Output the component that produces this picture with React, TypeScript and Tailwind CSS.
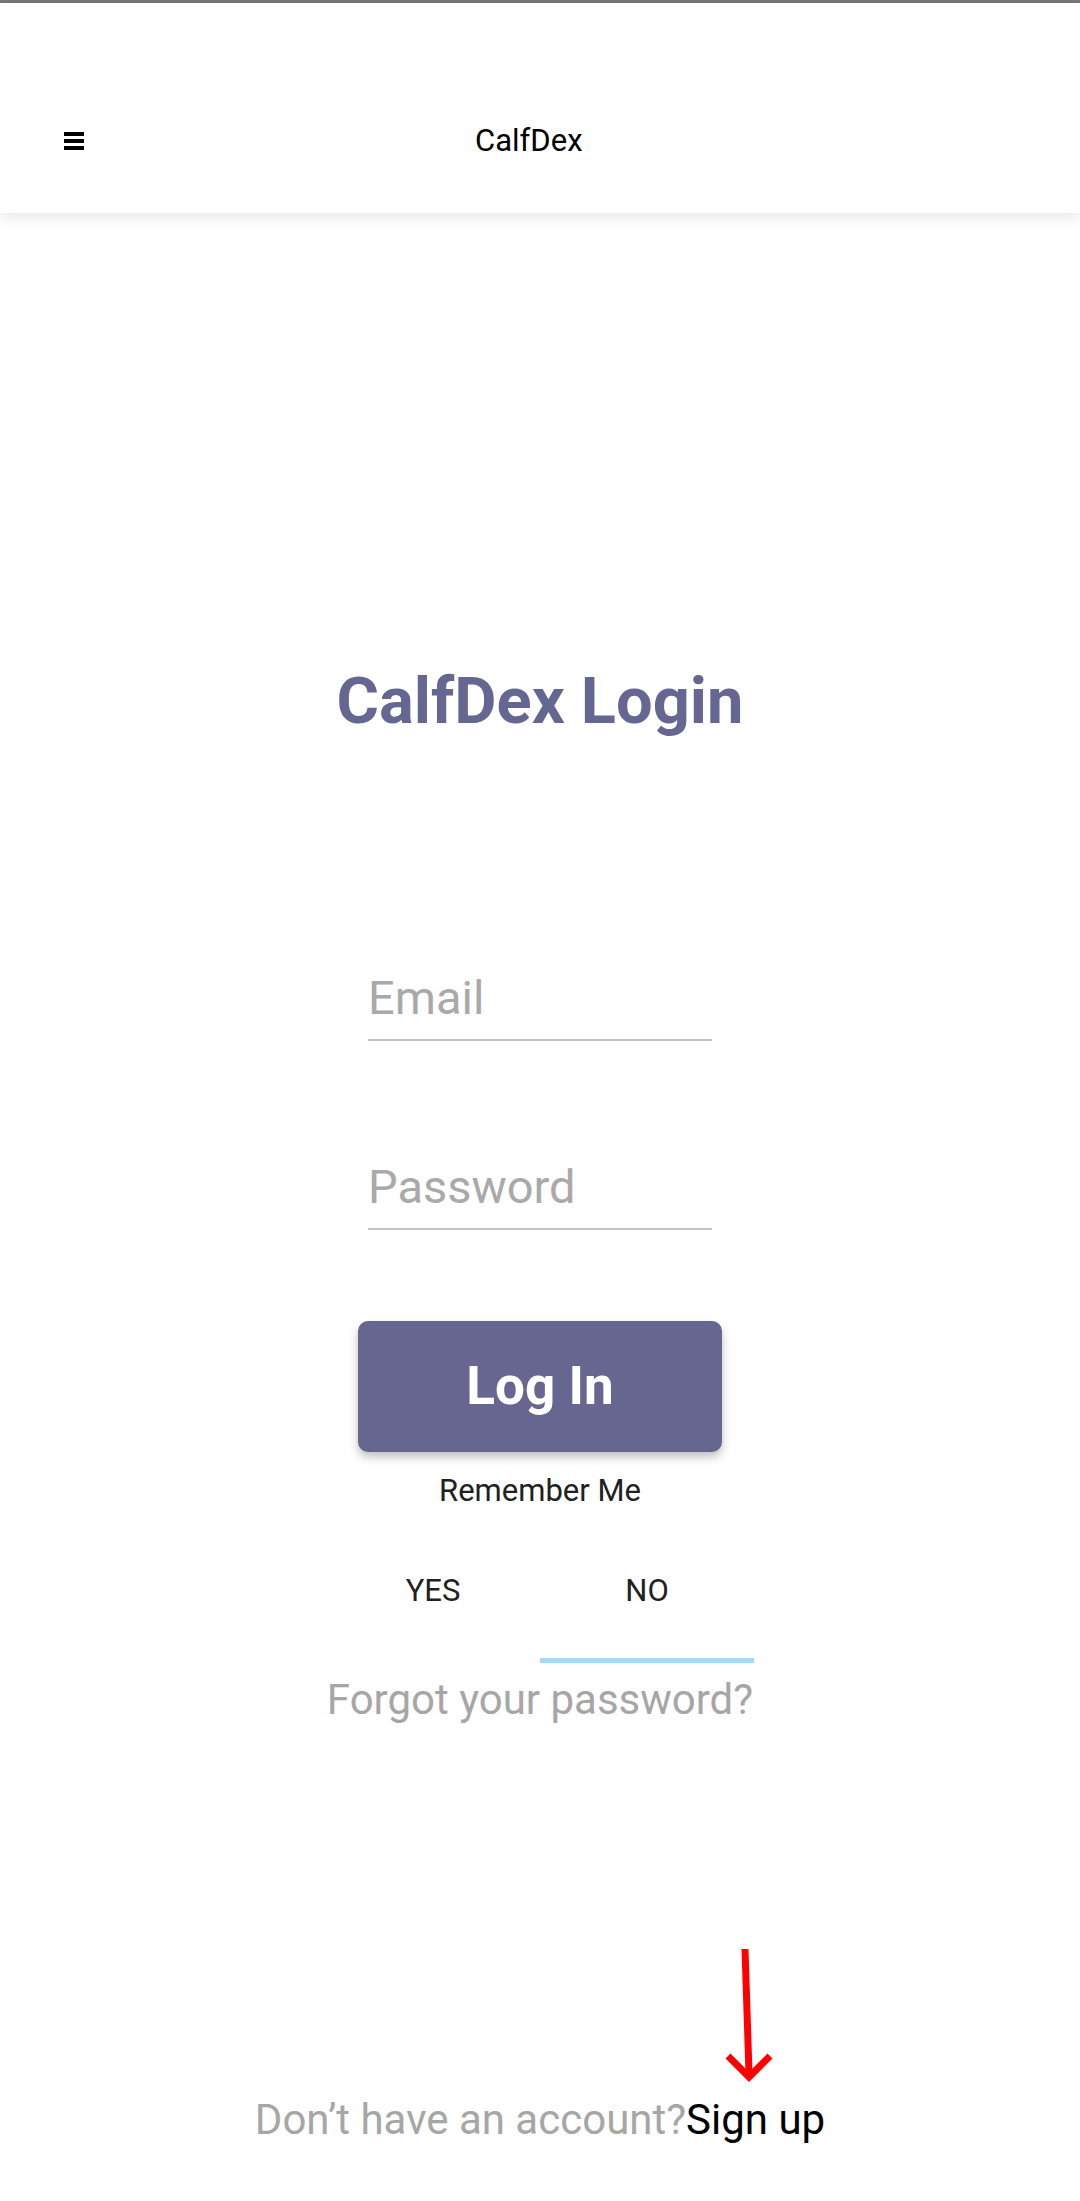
import React, { useState } from 'react';

// CalfDex login screen
const App: React.FC = () => {
  const [remember, setRemember] = useState<'yes' | 'no'>('no');

  return (
    <div className="relative min-h-[2201px] w-full bg-white font-['Roboto','Noto_Sans',sans-serif]">
      {/* status strip */}
      <div className="h-[3px] bg-[#767676]" />

      {/* app bar */}
      <header className="relative z-10 flex h-[210px] items-center bg-white pt-[66px] shadow-[0_4px_14px_rgba(0,0,0,0.10)]">
        <button className="ml-[64px] flex w-[20px] flex-col gap-[3px]" aria-label="Menu">
          <span className="block h-[4px] w-[20px] bg-black" />
          <span className="block h-[4px] w-[20px] bg-black" />
          <span className="block h-[4px] w-[20px] bg-black" />
        </button>
        <span className="ml-[391px] text-[31px] leading-[40px] text-black">CalfDex</span>
      </header>

      <main className="flex flex-col items-center">
        <h1 className="mt-[448px] text-[65px] font-bold leading-[80px] text-[#666692]">
          CalfDex Login
        </h1>

        <div className="mt-[229px] w-[344px] border-b-2 border-[#c2c2c2] pb-[13px]">
          <input
            type="email"
            placeholder="Email"
            className="block h-[56px] w-full bg-transparent text-[47px] leading-[56px] text-[#333] outline-none placeholder:text-[#a9a9a9]"
          />
        </div>

        <div className="mt-[118px] w-[344px] border-b-2 border-[#c2c2c2] pb-[13px]">
          <input
            type="password"
            placeholder="Password"
            className="block h-[56px] w-full bg-transparent text-[47px] leading-[56px] text-[#333] outline-none placeholder:text-[#a9a9a9]"
          />
        </div>

        <button className="mt-[91px] flex h-[131px] w-[364px] items-center justify-center rounded-[10px] bg-[#666691] text-[53px] font-bold text-white shadow-[0_5px_10px_rgba(0,0,0,0.25)]">
          Log In
        </button>

        <p className="mt-[19px] text-[31px] leading-[40px] text-[#212121]">Remember Me</p>

        <div className="mt-[60px] flex w-[428px]">
          {(['yes', 'no'] as const).map((opt) => (
            <button
              key={opt}
              onClick={() => setRemember(opt)}
              className="flex w-[214px] flex-col items-center"
            >
              <span className="text-[31px] leading-[40px] text-[#212121]">{opt.toUpperCase()}</span>
              <span
                className={
                  remember === opt
                    ? 'mt-[47px] block h-[5px] w-full bg-[#a6d9f8]'
                    : 'mt-[47px] block h-[5px] w-full bg-transparent'
                }
              />
            </button>
          ))}
        </div>

        <a className="mt-[12px] text-[42px] leading-[50px] text-[#a6a6a6]">Forgot your password?</a>

        <p className="mt-[370px] text-[42px] leading-[50px] text-[#a6a6a6]">
          Don’t have an account?<span className="text-black">Sign up</span>
        </p>
      </main>

      {/* red annotation arrow */}
      <svg
        className="absolute left-[720px] top-[1945px]"
        width="60"
        height="140"
        viewBox="0 0 60 140"
        fill="none"
        stroke="#ff0000"
        strokeWidth="7"
      >
        <line x1="25" y1="4" x2="29" y2="128" />
        <polyline points="8,111 29,132 50,111" />
      </svg>
    </div>
  );
};

export default App;
